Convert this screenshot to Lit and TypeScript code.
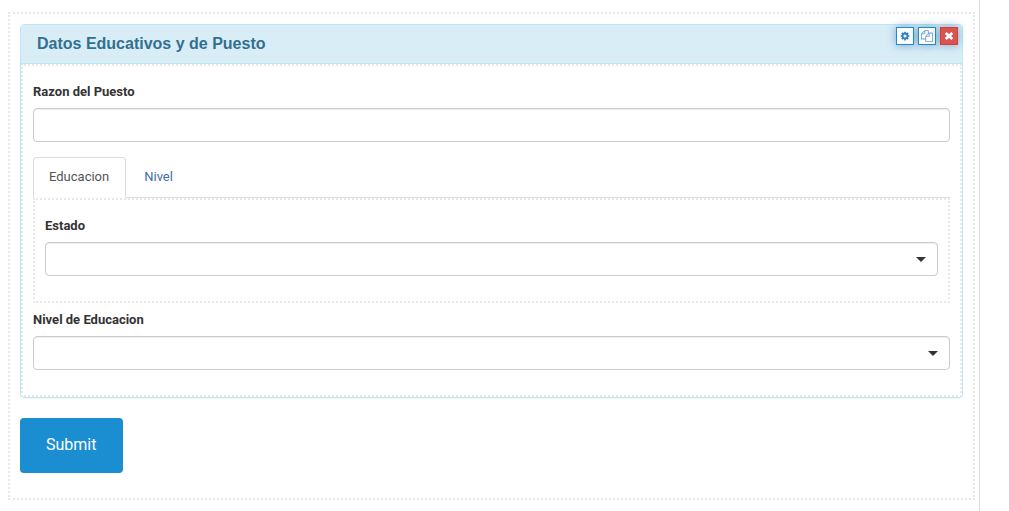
import { LitElement, html, css, svg } from "lit";
import { customElement, state } from "lit/decorators.js";

const gearIcon = svg`<svg viewBox="0 0 16 16" width="10" height="10" aria-hidden="true">
  <circle cx="8" cy="8" r="4" fill="none" stroke="currentColor" stroke-width="3" />
  <path fill="none" stroke="currentColor" stroke-width="2.6" d="M8 1v2.500M8 12.500V15M1 8h2.500M12.500 8H15M3 3l2 2M11 11l2 2M13 3l-2 2M5 11l-2 2" />
</svg>`;

const copyIcon = svg`<svg viewBox="0 0 1792 1792" width="12" height="12" aria-hidden="true">
  <path fill="currentColor" d="M1696 384q40 0 68 28t28 68v1216q0 40-28 68t-68 28h-960q-40 0-68-28t-28-68v-288h-544q-40 0-68-28t-28-68v-672q0-40 20-88t48-76l408-408q28-28 76-48t88-20h416q40 0 68 28t28 68v328q68-40 128-40h416zm-544 213l-299 299h299v-299zm-640-384l-299 299h299v-299zm196 647l316-316v-416h-384v416q0 40-28 68t-68 28h-416v640h512v-256q0-40 20-88t48-76zm956 804v-1152h-384v416q0 40-28 68t-68 28h-416v640h896z" />
</svg>`;

const removeIcon = svg`<svg viewBox="0 0 10 10" width="10" height="10" aria-hidden="true">
  <path fill="none" stroke="currentColor" stroke-width="2.800" d="M1.700 2l6.600 6M8.300 2l-6.600 6" />
</svg>`;

const caretIcon = svg`<svg class="caret" viewBox="0 0 10 5" width="10" height="5" aria-hidden="true">
  <path fill="#333" d="M0 0h10L5 5z" />
</svg>`;

@customElement("app-root")
export class AppRoot extends LitElement {
  @state() private activeTab = 0;

  private tabs = ["Educacion", "Nivel"];

  static styles = css`
    :host {
      display: block;
      font: 13px/20px Roboto, "Open Sans", sans-serif;
      color: #333;
      background: #fff;
    }
    * {
      box-sizing: border-box;
    }
    .page {
      display: grid;
      grid-template-columns: minmax(0, 1fr) 29px;
      min-height: 100vh;
    }
    .builder {
      padding: 12px 4px 11px 8px;
      border-right: 1px solid #ddd;
    }
    .drop {
      border: 2px dotted #e8e8e8;
    }
    .form {
      padding: 10px 10px 25px;
    }
    .panel {
      position: relative;
      margin-bottom: 20px;
      border: 1px solid #bce8f1;
      border-radius: 4px;
      box-shadow: 0 1px 1px rgba(0, 0, 0, 0.05);
    }
    .panel-heading {
      padding: 9px 16px;
      border-bottom: 1px solid #bce8f1;
      border-radius: 3px 3px 0 0;
      background: #d9edf7;
      color: #31708f;
    }
    .panel-title {
      margin: 0;
      font: bold 16px/20px "Liberation Sans", Arial, sans-serif;
    }
    .tools {
      position: absolute;
      top: 2px;
      right: 4px;
      display: flex;
      gap: 4px;
    }
    .tool {
      display: grid;
      place-items: center;
      width: 18px;
      height: 18px;
      padding: 0;
      border: 1px solid #1b8dd1;
      background: #fff;
      color: #2f7fc2;
      box-shadow: 0 0 10px rgba(48, 113, 169, 0.6);
    }
    .tool svg {
      display: block;
    }
    .tool.copy {
      color: #6f9fd0;
    }
    .tool.remove {
      border-color: #d43f3a;
      background: #d9534f;
      color: #fff;
    }
    .body {
      padding: 16px 10px 25px;
    }
    label {
      display: block;
      margin-bottom: 6px;
      font-weight: 700;
    }
    .control {
      display: block;
      width: 100%;
      height: 34px;
      padding: 6px 12px;
      border: 1px solid #ccc;
      border-radius: 4px;
      background: #fff;
      color: #555;
      font: inherit;
      box-shadow: inset 0 1px 1px rgba(0, 0, 0, 0.075);
      appearance: none;
    }
    .select {
      display: grid;
      align-items: center;
    }
    .select > * {
      grid-area: 1 / 1;
    }
    .caret {
      justify-self: end;
      margin-right: 12px;
      pointer-events: none;
    }
    .tabs {
      display: flex;
      gap: 2px;
      margin-top: 15px;
      border-bottom: 1px solid #ddd;
    }
    .tab {
      height: 41px;
      margin-bottom: -1px;
      padding: 0 16px 2px 15px;
      border: 1px solid transparent;
      border-radius: 4px 4px 0 0;
      background: transparent;
      color: #3f6ea8;
      font: inherit;
    }
    .tab[aria-selected="true"] {
      border-color: #ddd;
      border-bottom-color: #fff;
      background: #fff;
      color: #555;
    }
    .tab-panel {
      margin-bottom: 7px;
    }
    .submit {
      display: block;
      height: 55px;
      padding: 0 27px 2px 26px;
      border: 0;
      border-radius: 4px;
      background: #1b8dd1;
      color: #fff;
      font: 16px/20px Roboto, "Open Sans", sans-serif;
    }
  `;

  private renderSelect(id: string, label: string) {
    return html`
      <label for=${id}>${label}</label>
      <div class="select">
        <select class="control" id=${id}>
          <option></option>
        </select>
        ${caretIcon}
      </div>
    `;
  }

  render() {
    return html`
      <div class="page">
        <main class="builder">
          <form class="form drop" @submit=${(e: Event) => e.preventDefault()}>
            <section class="panel">
              <header class="panel-heading">
                <h3 class="panel-title">Datos Educativos y de Puesto</h3>
              </header>
              <div class="tools">
                <button class="tool" type="button" aria-label="Editar">${gearIcon}</button>
                <button class="tool copy" type="button" aria-label="Copiar">${copyIcon}</button>
                <button class="tool remove" type="button" aria-label="Eliminar">${removeIcon}</button>
              </div>
              <div class="body drop">
                <label for="razon">Razon del Puesto</label>
                <input class="control" id="razon" type="text" />
                <div class="tabs" role="tablist">
                  ${this.tabs.map(
                    (name, i) => html`<button
                      class="tab"
                      type="button"
                      role="tab"
                      aria-selected=${this.activeTab === i ? "true" : "false"}
                      @click=${() => (this.activeTab = i)}
                    >${name}</button>`
                  )}
                </div>
                <div class="tab-panel body drop" role="tabpanel">
                  ${this.renderSelect("estado", "Estado")}
                </div>
                ${this.renderSelect("nivel", "Nivel de Educacion")}
              </div>
            </section>
            <button class="submit" type="submit">Submit</button>
          </form>
        </main>
      </div>
    `;
  }
}
